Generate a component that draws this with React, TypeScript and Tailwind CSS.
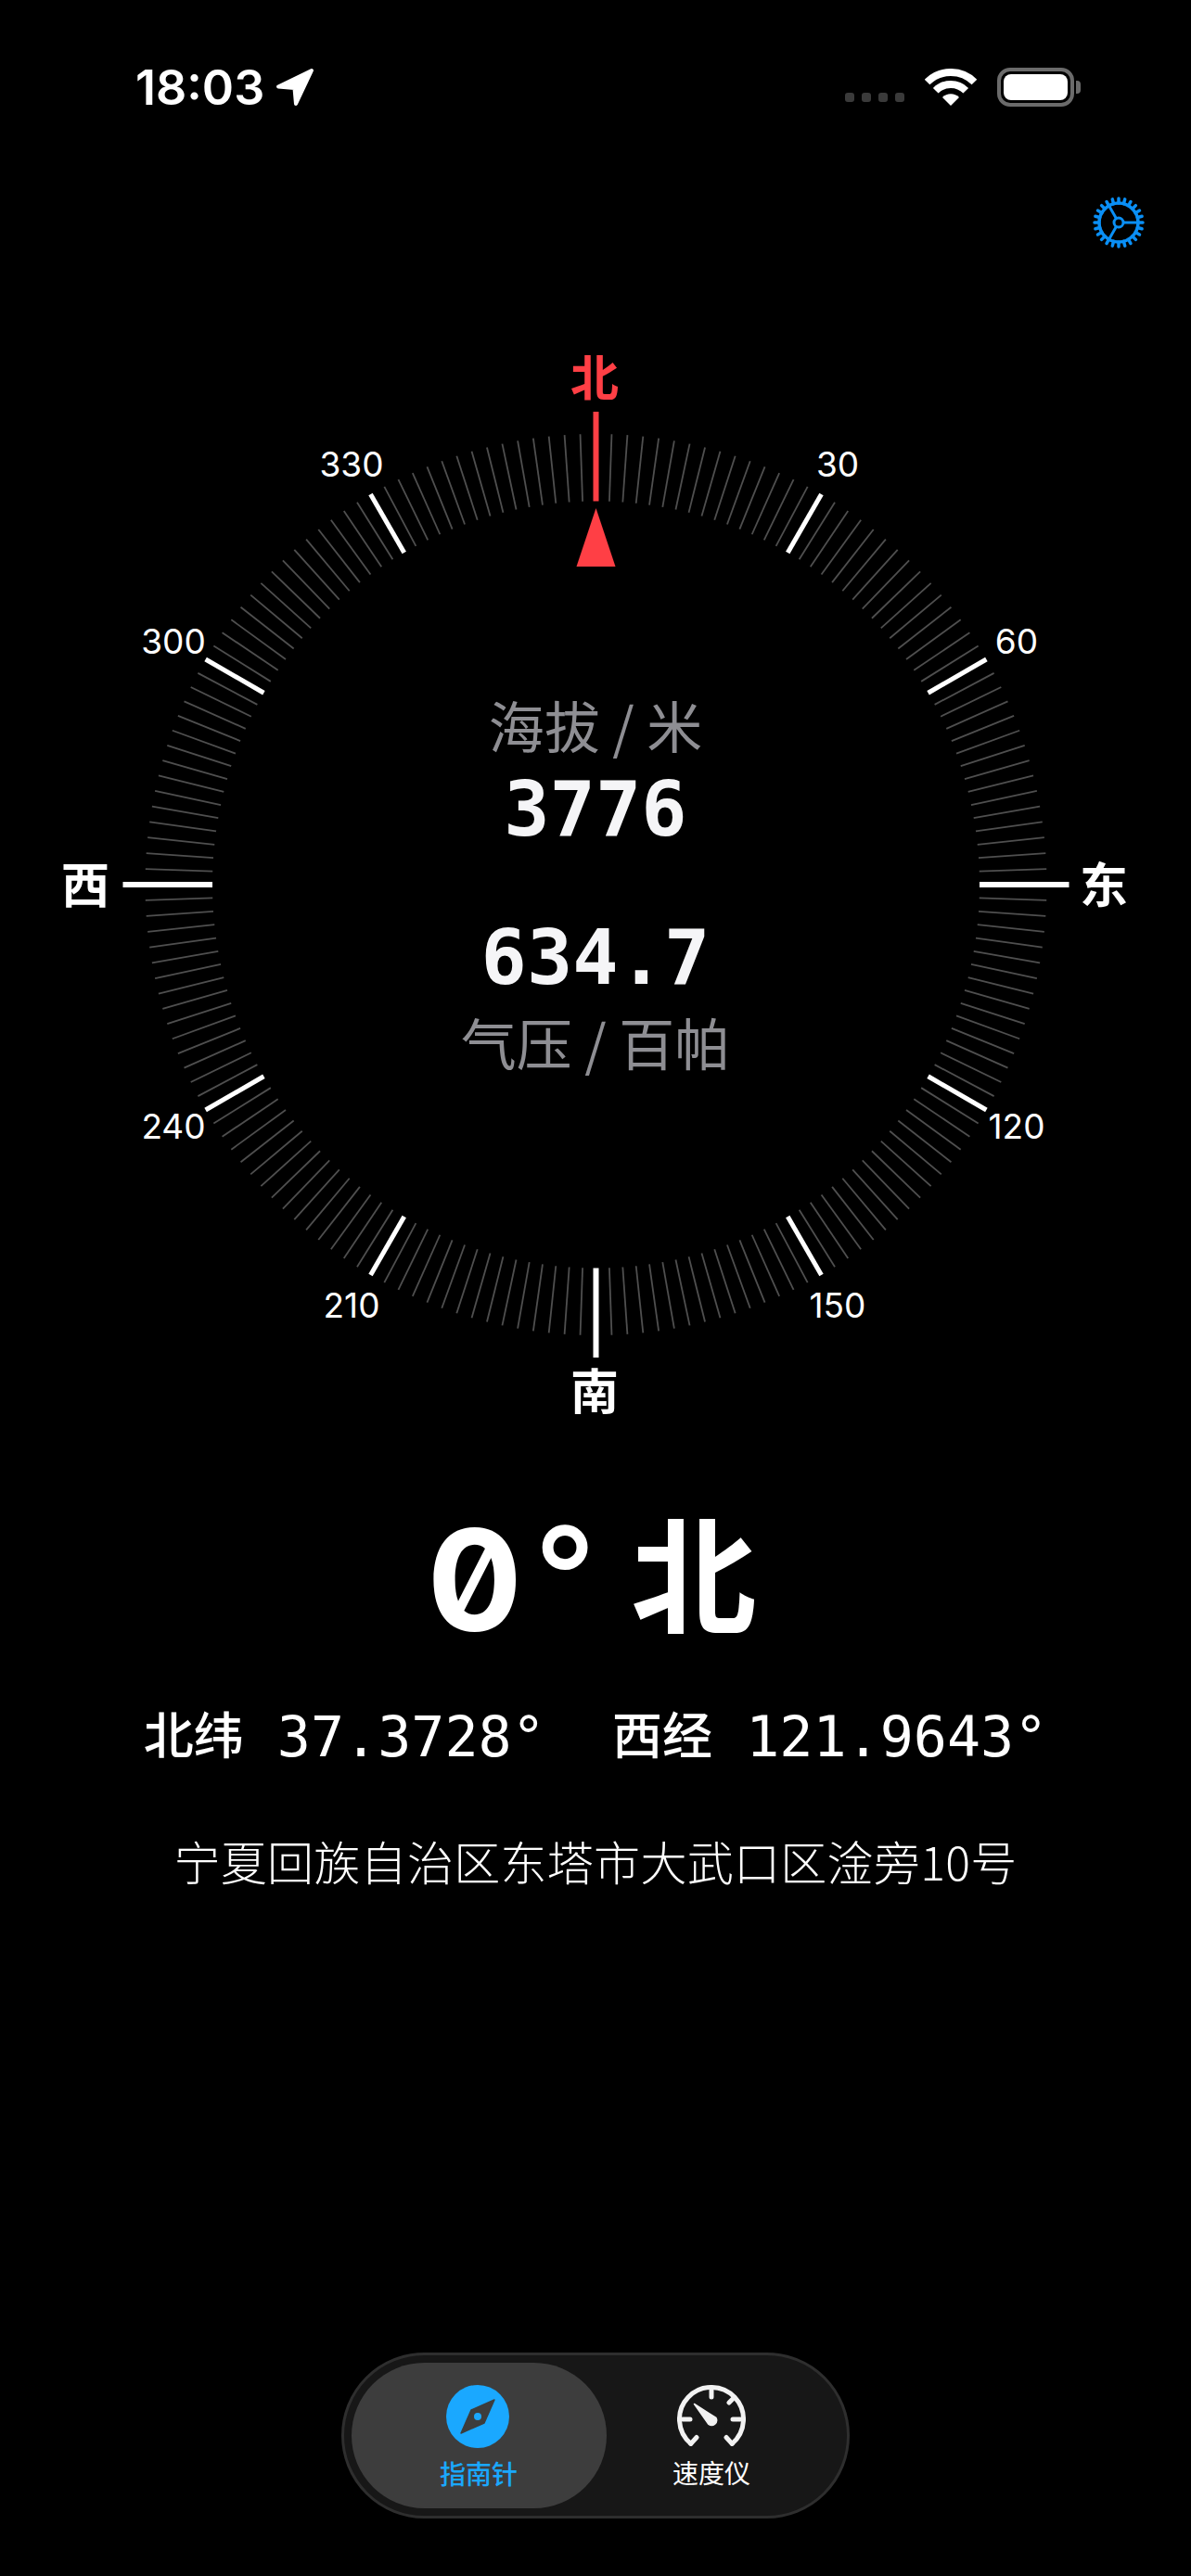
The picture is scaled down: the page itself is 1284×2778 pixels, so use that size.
const MONO = "font-['DejaVu_Sans_Mono','Noto_Sans_CJK_SC',monospace]";

const CX = 520.5;
const CY = 575;

function polar(deg: number, r: number) {
  const a = ((deg - 90) * Math.PI) / 180;
  return { x: CX + r * Math.cos(a), y: CY + r * Math.sin(a) };
}

function Dial() {
  const ticks = [];
  for (let deg = 0; deg < 360; deg += 2) {
    const cardinal = deg % 90 === 0;
    const major = deg % 30 === 0;
    const from = polar(deg, 413.5);
    const to = polar(deg, cardinal ? 510 : 486);
    ticks.push(
      <line
        key={deg}
        x1={from.x}
        y1={from.y}
        x2={to.x}
        y2={to.y}
        stroke={deg === 0 ? "#ff3f45" : major ? "#ffffff" : "#4f4f4f"}
        strokeWidth={cardinal ? 6 : major ? 5 : 1.8}
      />
    );
  }
  return (
    <svg className="absolute left-[122px] top-0 w-[1040px] h-[1150px]" viewBox="0 0 1040 1150">
      {ticks}
      <polygon points={`${CX},169 ${CX - 21},232 ${CX + 21},232`} fill="#ff3f45" />
    </svg>
  );
}

const degreeLabels = [
  { text: "330", className: "left-[379px] top-[122px]" },
  { text: "30", className: "left-[903px] top-[122px]" },
  { text: "300", className: "left-[187px] top-[313px]" },
  { text: "60", className: "left-[1096px] top-[313px]" },
  { text: "240", className: "left-[187px] top-[836px]" },
  { text: "120", className: "left-[1096px] top-[836px]" },
  { text: "210", className: "left-[379px] top-[1029px]" },
  { text: "150", className: "left-[903px] top-[1029px]" },
];

const cardinalLabels = [
  { text: "北", className: "left-[641px] top-[26px] text-[#ff3f45]" },
  { text: "东", className: "left-[1190px] top-[573px] text-white" },
  { text: "南", className: "left-[641px] top-[1119px] text-white" },
  { text: "西", className: "left-[92px] top-[573px] text-white" },
];

function LocationArrow() {
  return (
    <svg className="w-[42px] h-[42px]" viewBox="0 0 42 42">
      <path d="M39 3 3 20.500 20.500 22 22 39Z" fill="#fff" stroke="#fff" strokeWidth="4" strokeLinejoin="round" />
    </svg>
  );
}

function Wifi() {
  return (
    <svg className="w-[56px] h-[40px]" viewBox="0 0 56 40" fill="none">
      <path d="M2.540 14.540A36 36 0 0 1 53.460 14.540" stroke="#fff" strokeWidth="8" />
      <path d="M11.740 23.740A23 23 0 0 1 44.260 23.740" stroke="#fff" strokeWidth="8" />
      <path d="M28 40 19 31A12.700 12.700 0 0 1 37 31Z" fill="#fff" />
    </svg>
  );
}

function StatusBar() {
  return (
    <div className="flex items-center justify-between h-[188px] pl-[146px] pr-[119px]">
      <div className="flex items-center gap-[12px]">
        <span className="font-['Inter',sans-serif] font-semibold text-[52px] leading-none text-white mt-[2px]">18:03</span>
        <LocationArrow />
      </div>
      <div className="flex items-center">
        <div className="flex gap-[8px] mt-[22px] mr-[22px]">
          <div className="w-[10px] h-[10px] rounded-[3px] bg-[#3a3a3a]" />
          <div className="w-[10px] h-[10px] rounded-[3px] bg-[#3a3a3a]" />
          <div className="w-[10px] h-[10px] rounded-[3px] bg-[#3a3a3a]" />
          <div className="w-[10px] h-[10px] rounded-[3px] bg-[#3a3a3a]" />
        </div>
        <Wifi />
        <div className="flex items-center ml-[22px]">
          <div className="w-[83px] h-[42px] rounded-[14px] border-[4px] border-[#6b6b6b] p-[3px]">
            <div className="w-full h-full rounded-[8px] bg-white" />
          </div>
          <div className="w-[5px] h-[14px] ml-[2px] rounded-r-[4px] bg-[#6b6b6b]" />
        </div>
      </div>
    </div>
  );
}

function GearIcon() {
  const teeth = [];
  for (let i = 0; i < 24; i++) {
    const a = (i * 15 * Math.PI) / 180;
    teeth.push(
      <line
        key={i}
        x1={28 + 21 * Math.cos(a)}
        y1={28 + 21 * Math.sin(a)}
        x2={28 + 26 * Math.cos(a)}
        y2={28 + 26 * Math.sin(a)}
        strokeWidth="3.5"
        strokeLinecap="round"
      />
    );
  }
  return (
    <svg className="w-[56px] h-[56px]" viewBox="0 0 56 56" fill="none" stroke="#0a8ff5">
      {teeth}
      <circle cx="28" cy="28" r="21" strokeWidth="3.500" />
      <circle cx="28" cy="28" r="5" strokeWidth="3" />
      <path d="M33 28H49M25.500 23.700 17.500 9.800M25.500 32.300 17.500 46.200" strokeWidth="3" />
    </svg>
  );
}

function CompassIcon() {
  return (
    <svg className="w-[68px] h-[68px] mr-[3px]" viewBox="0 0 68 68">
      <circle cx="34" cy="34" r="34" fill="#1aa8ff" />
      <path d="M52 16 41 41 16 52 27 27Z" fill="#3d3d3d" stroke="#3d3d3d" strokeWidth="1.500" strokeLinejoin="round" />
      <circle cx="34" cy="34" r="4" fill="#1aa8ff" />
    </svg>
  );
}

function SpeedIcon() {
  return (
    <svg className="w-[74px] h-[68px]" viewBox="0 0 74 68" fill="none" stroke="#f2f2f2" strokeLinecap="round">
      <path d="M14.800 63.400A34.500 34.500 0 1 1 59.200 63.400" strokeWidth="5" />
      <path d="M14.800 63.400 21 56.500M59.200 63.400 53 56.500M37 6V13M61.500 13.500 56 19M6 37H14M60 37H68" strokeWidth="5" />
      <path d="M18.500 20.500 42 35.500A5.500 5.500 0 0 1 34 42.500Z" fill="#f2f2f2" stroke="#f2f2f2" strokeWidth="1.500" strokeLinejoin="round" />
    </svg>
  );
}

export default function App() {
  return (
    <div className="flex flex-col w-[1284px] h-[2778px] bg-black overflow-hidden font-['Noto_Sans_CJK_SC',sans-serif]">
      <StatusBar />

      <div className="flex justify-end h-[56px] mt-[24px] pr-[50px]">
        <GearIcon />
      </div>

      {/* Compass dial */}
      <div className="relative flex items-center justify-center h-[1150px] mt-[111px] w-full">
        <Dial />
        {degreeLabels.map((l) => (
          <span
            key={l.text}
            className={`absolute -translate-x-1/2 -translate-y-1/2 font-['Inter',sans-serif] text-[37px] leading-[44px] text-white ${l.className}`}
          >
            {l.text}
          </span>
        ))}
        {cardinalLabels.map((l) => (
          <span
            key={l.text}
            className={`absolute -translate-x-1/2 -translate-y-1/2 font-bold text-[52px] leading-[60px] ${l.className}`}
          >
            {l.text}
          </span>
        ))}
        <div className="relative flex flex-col items-center mb-[4px]">
          <div className="text-[60px] leading-[70px] text-[#8e8e93]">海拔 / 米</div>
          <div className={`${MONO} mt-[17px] font-bold text-[82px] leading-[80px] text-[#f5f5f7]`}>3776</div>
          <div className={`${MONO} mt-[80px] font-bold text-[82px] leading-[80px] text-[#f5f5f7]`}>634.7</div>
          <div className="mt-[15px] text-[60px] leading-[70px] text-[#8e8e93]">气压 / 百帕</div>
        </div>
      </div>

      <div className={`${MONO} flex items-center justify-center mt-[90px] h-[170px] pr-[8px] font-bold text-white`}>
        <span className="font-['Inter',sans-serif] slashed-zero text-[152px] leading-none">0</span>
        <span className="ml-[1px] text-[150px] leading-none">°</span>
        <span className="ml-[26px] text-[135px] leading-none">北</span>
      </div>

      <div className={`${MONO} flex items-center justify-center mt-[49px] h-[70px] whitespace-pre text-[60px] text-white`}>
        <span className="text-[54px] font-medium">北纬</span>
        {" 37.3728°  "}
        <span className="text-[54px] font-medium">西经</span>
        {" 121.9643°"}
      </div>

      <div className="mt-[68px] h-[60px] text-center font-light tracking-[0.3px] text-[50px] leading-[60px] text-white">
        宁夏回族自治区东塔市大武口区淦旁10号
      </div>

      {/* Tab bar */}
      <div className="flex justify-center mt-auto pb-[62px]">
        <div className="flex w-[548px] h-[179px] p-[8px] rounded-full border-[3px] border-[#2e2e2e] bg-[#171717]">
          <div className="flex flex-col items-center justify-center gap-[10px] w-[275px] pt-[3px] rounded-full bg-[#3d3d3d]">
            <CompassIcon />
            <span className="text-[28px] leading-[34px] font-medium text-[#1aa8ff] mr-[1px]">指南针</span>
          </div>
          <div className="flex flex-col items-center justify-center gap-[9px] w-[226px] pt-[2px]">
            <SpeedIcon />
            <span className="text-[28px] leading-[34px] text-white">速度仪</span>
          </div>
        </div>
      </div>
    </div>
  );
}
